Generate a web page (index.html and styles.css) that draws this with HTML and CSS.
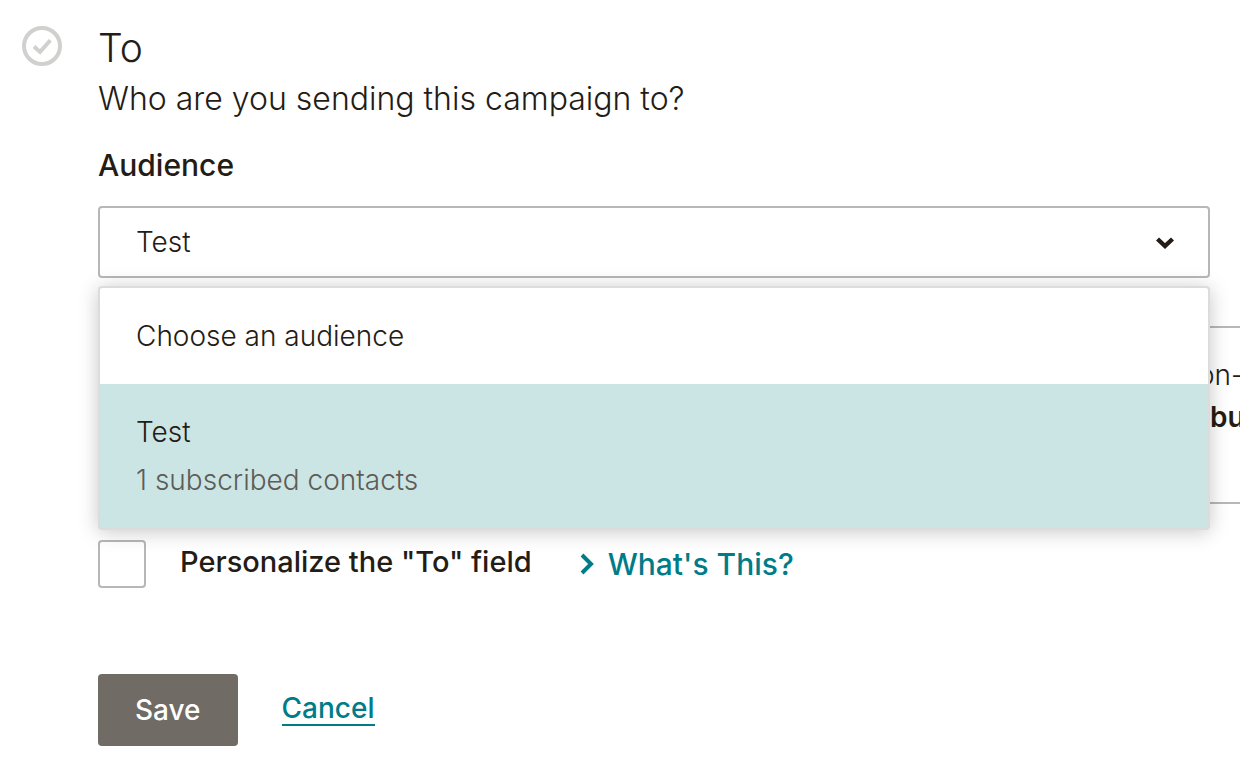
FILE: index.html
```html
<!DOCTYPE html>
<html lang="en">
<head>
<meta charset="utf-8">
<title>Campaign recipients</title>
<link rel="stylesheet" href="styles.css">
</head>
<body>
<main class="step">
  <svg class="step-status" viewBox="0 0 40 40" aria-hidden="true">
    <circle cx="20" cy="20" r="18" fill="none" stroke="currentColor" stroke-width="4"/>
    <path d="M12 20.500l6 5.500L28.300 14.200" fill="none" stroke="currentColor" stroke-width="4"/>
  </svg>
  <form class="step-body">
    <h1 class="title">To</h1>
    <p class="subtitle">Who are you sending this campaign to?</p>

    <label class="field-label" for="audience">Audience</label>
    <div class="picker">
      <select class="picker-select" id="audience">
        <option>Choose an audience</option>
        <option selected>Test</option>
      </select>
      <svg class="picker-arrow" viewBox="0 0 18 12" aria-hidden="true">
        <path d="M1.500 2L9 9l7.500-7" fill="none" stroke="currentColor" stroke-width="4.400"/>
      </svg>
      <ul class="menu" role="listbox" aria-label="Audience">
        <li class="menu-item" role="option" aria-selected="false">Choose an audience</li>
        <li class="menu-item menu-item-active" role="option" aria-selected="true">
          Test
          <span class="menu-note">1 subscribed contacts</span>
        </li>
      </ul>
    </div>

    <aside class="notice">
      <p class="notice-line">on-</p>
      <p class="notice-line notice-strong">bu</p>
    </aside>

    <div class="personalize">
      <input class="checkbox" type="checkbox" id="personalize">
      <label class="checkbox-label" for="personalize">Personalize the "To" field</label>
      <a class="help" href="#help">
        <svg class="help-arrow" viewBox="0 0 14 22" aria-hidden="true">
          <path d="M2 2l9 9-9 9" fill="none" stroke="currentColor" stroke-width="4"/>
        </svg>
        What's This?
      </a>
    </div>

    <div class="actions">
      <button class="save" type="button">Save</button>
      <a class="cancel" href="#cancel">Cancel</a>
    </div>
  </form>
</main>
</body>
</html>
```
FILE: styles.css
```css
* {
  box-sizing: border-box;
}

body {
  margin: 0;
  background: #fff;
  color: #241c15;
  font-family: Inter, "Liberation Sans", sans-serif;
  font-size: 28px;
  font-weight: 300;
  line-height: 48px;
  overflow-x: hidden;
}

h1,
p,
ul {
  margin: 0;
  padding: 0;
}

.step {
  display: flex;
  align-items: flex-start;
  gap: 36px;
  padding: 24px 30px 32px 22px;
}

.step-status {
  flex: none;
  width: 40px;
  height: 40px;
  margin-top: 2px;
  color: #d0d0ce;
}

.step-body {
  flex: 1;
  min-width: 0;
}

.title {
  font-size: 39px;
  font-weight: 300;
}

.subtitle {
  margin-top: 3px;
  font-size: 32px;
}

.field-label {
  display: block;
  margin: 18px 0 17px;
  font-size: 30px;
  font-weight: 500;
}

.picker {
  position: relative;
}

.picker-select {
  display: block;
  width: 100%;
  height: 72px;
  padding: 0 72px 0 36px;
  appearance: none;
  border: 2px solid #b8b7b6;
  border-radius: 4px;
  background: #fff;
  color: inherit;
  font: inherit;
}

.picker-arrow {
  position: absolute;
  top: 31px;
  right: 36px;
  width: 18px;
  height: 12px;
  pointer-events: none;
}

.menu {
  position: absolute;
  z-index: 1;
  top: 80px;
  left: 0;
  right: 0;
  border: 2px solid #dcdcdb;
  border-radius: 4px;
  background: #fff;
  box-shadow: 0 2px 20px rgba(0, 0, 0, 0.22);
  list-style: none;
}

.menu-item {
  padding: 24px 36px;
}

.menu-item-active {
  background: #cbe5e5;
}

.menu-note {
  display: block;
  color: #5f5c58;
}

.notice {
  width: 160px;
  height: 178px;
  margin: 48px -110px 0 auto;
  padding: 26px 0 0 36px;
  border: 2px solid #b8b7b6;
  line-height: 42px;
}

.notice-strong {
  padding-left: 12px;
  font-weight: 600;
}

.personalize {
  display: flex;
  align-items: center;
  margin-top: 36px;
  line-height: 44px;
}

.checkbox {
  flex: none;
  width: 48px;
  height: 48px;
  margin: 0;
  appearance: none;
  border: 2px solid #b8b7b6;
  border-radius: 4px;
}

.checkbox-label {
  margin: 0 48px 4px 34px;
  font-size: 29px;
  font-weight: 500;
}

.help {
  display: flex;
  align-items: center;
  gap: 14px;
  color: #007c89;
  font-size: 30px;
  font-weight: 500;
  text-decoration: none;
}

.help-arrow {
  width: 14px;
  height: 22px;
}

.actions {
  display: flex;
  align-items: center;
  gap: 44px;
  margin-top: 86px;
}

.save {
  padding: 12px 37px;
  border: 0;
  border-radius: 4px;
  background: #706b64;
  color: #fff;
  font: inherit;
  font-weight: 500;
}

.cancel {
  margin-bottom: 2px;
  border-bottom: 2px solid #007c89;
  color: #007c89;
  font-weight: 500;
  line-height: 32px;
  text-decoration: none;
}
```
